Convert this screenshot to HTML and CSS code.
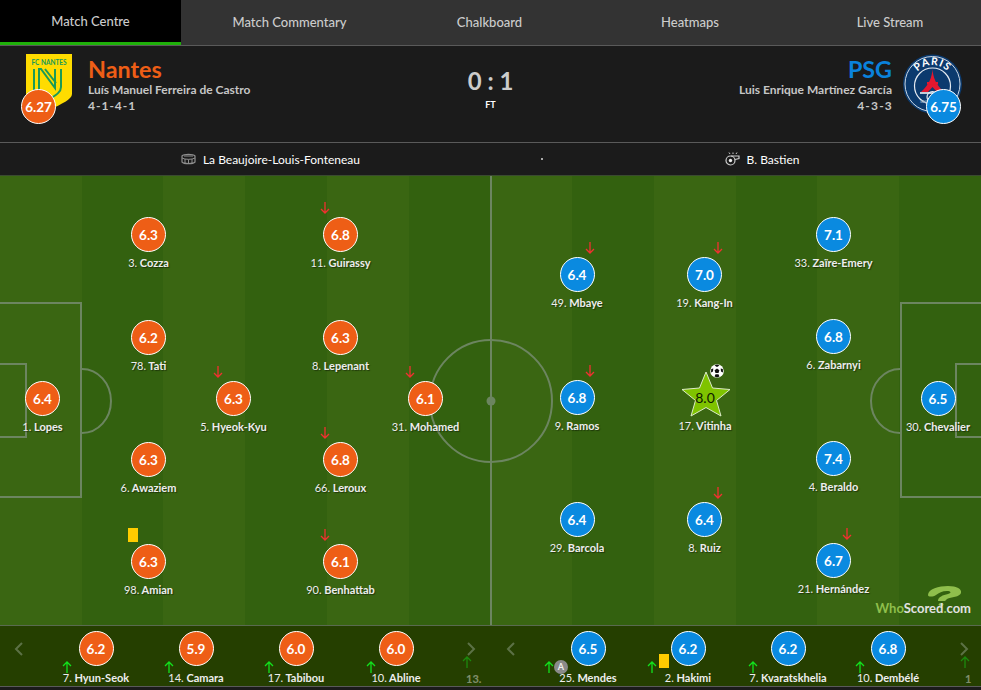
FILE: index.html
```html
<!DOCTYPE html>
<html lang="en">
<head>
<meta charset="utf-8">
<title>Nantes 0:1 PSG - Match Centre</title>
<link rel="stylesheet" href="styles.css">
</head>
<body>
<nav class="tabs">
  <a class="tab active">Match Centre</a>
  <a class="tab">Match Commentary</a>
  <a class="tab">Chalkboard</a>
  <a class="tab">Heatmaps</a>
  <a class="tab">Live Stream</a>
</nav>

<header class="match-header">
  <div class="team home">
    <div class="crest-wrap">
      <svg class="crest" width="46" height="56" viewBox="0 0 46 56">
        <path d="M0 0H46V40C46 45 36 50 23 56C10 50 0 45 0 40Z" fill="#ffdc00"/>
        <text x="23" y="11" class="crest-fc">FC NANTES</text>
        <g fill="none" stroke="#1a9a57" stroke-width="2">
          <path d="M8 15V36L12 39"/>
          <path d="M13 36V15H15L29 34V15"/>
          <path d="M19 15L30 29"/>
          <path d="M35 15V33C35 39 28 42 22 46"/>
        </g>
      </svg>
      <span class="badge orange team-badge">6.27</span>
    </div>
    <div class="team-text">
      <h2 class="team-name orange-text">Nantes</h2>
      <div class="manager">Luís Manuel Ferreira de Castro</div>
      <div class="formation">4-1-4-1</div>
    </div>
  </div>
  <div class="score">
    <div class="score-value">0 : 1</div>
    <div class="score-status">FT</div>
  </div>
  <div class="team away">
    <div class="team-text">
      <h2 class="team-name blue-text">PSG</h2>
      <div class="manager">Luis Enrique Martínez García</div>
      <div class="formation">4-3-3</div>
    </div>
    <div class="crest-wrap">
      <svg class="crest" width="60" height="60" viewBox="0 0 60 60">
        <circle cx="29.500" cy="30" r="29.500" fill="#0b3a6e"/>
        <circle cx="29.500" cy="30" r="27.500" fill="none" stroke="#c9d6e4" stroke-width="1"/>
        <path id="parisArc" d="M9.500 31A20 20 0 0 1 49.500 31" fill="none"/>
        <text class="crest-paris"><textPath href="#parisArc" startOffset="50%">PARIS</textPath></text>
        <circle cx="29.500" cy="32" r="18" fill="none" stroke="#e4eaf1" stroke-width="1.200"/>
        <path d="M29.500 15C30 23 33 31 41 38H34L29.500 33L25 38H18C26 31 29 23 29.500 15Z" fill="#e2172f"/>
        <path d="M24 28H35V30.500H24Z" fill="#e2172f"/>
        <path d="M17 39H42" stroke="#fff" stroke-width="1.500"/>
        <circle cx="29.500" cy="43" r="5.500" fill="none" stroke="#e4eaf1" stroke-width="1.200"/>
        <text x="17" y="49" class="crest-saint">SAINT</text>
      </svg>
      <span class="badge blue team-badge">6.75</span>
    </div>
  </div>
</header>

<section class="info-bar">
  <div class="info-cell">
    <svg width="15" height="12" viewBox="0 0 15 12"><path d="M1 3C3 .8 12 .8 14 3V9C12 11.200 3 11.200 1 9Z" fill="none" stroke="#8f8f8f" stroke-width="1.200"/><path d="M1 5C4 6.800 11 6.800 14 5M3 3H12M4 6V10M7.500 6.500V10.500M11 6V10" fill="none" stroke="#8f8f8f"/></svg>
    <span>La Beaujoire-Louis-Fonteneau</span>
  </div>
  <div class="info-dot"></div>
  <div class="info-cell">
    <svg width="15" height="14" viewBox="0 0 15 14"><circle cx="5.500" cy="8.500" r="4.500" fill="none" stroke="#ccc" stroke-width="1.200"/><circle cx="5.500" cy="8.500" r="1.700" fill="#eee"/><path d="M6 4H14V6.500L10 7.500" fill="none" stroke="#ccc" stroke-width="1.200"/><path d="M5 2L4 .5M8 2V.5M11 2L12 .5" stroke="#ccc"/></svg>
    <span>B. Bastien</span>
  </div>
</section>

<main class="pitch">
  <svg class="lines" width="981" height="449" viewBox="0 0 981 449">
    <g fill="none" stroke="#6c8560" stroke-width="2">
      <path d="M491 0V449"/>
      <circle cx="491" cy="225" r="61"/>
      <path d="M-2 127H81V321H-2"/>
      <path d="M-2 188H26V261H-2"/>
      <path d="M82 193A29 32 0 0 1 82 257"/>
      <path d="M983 127H901V321H983"/>
      <path d="M983 188H956V261H983"/>
      <path d="M900 193A29 32 0 0 0 900 257"/>
    </g>
    <circle cx="491" cy="225" r="4.500" fill="#6c8560"/>
  </svg>

  <div class="player" style="left:42.500px;top:205px"><span class="badge orange">6.4</span><span class="name"><i>1.</i> Lopes</span></div>
  <div class="player" style="left:148.500px;top:41px"><span class="badge orange">6.3</span><span class="name"><i>3.</i> Cozza</span></div>
  <div class="player" style="left:148.500px;top:144px"><span class="badge orange">6.2</span><span class="name"><i>78.</i> Tati</span></div>
  <div class="player" style="left:148.500px;top:266px"><span class="badge orange">6.3</span><span class="name"><i>6.</i> Awaziem</span></div>
  <div class="player" style="left:148.500px;top:368px"><span class="badge orange">6.3</span><span class="name"><i>98.</i> Amian</span><b class="yellow-card card-amian"></b></div>
  <div class="player" style="left:233.500px;top:205px"><span class="badge orange">6.3</span><span class="name"><i>5.</i> Hyeok-Kyu</span><svg class="sub-off off-left" width="10" height="12" viewBox="0 0 10 12"><path d="M5 0V11M1 7L5 11L9 7" fill="none" stroke="#f23030" stroke-width="1.300"/></svg></div>
  <div class="player" style="left:340.500px;top:41px"><span class="badge orange">6.8</span><span class="name"><i>11.</i> Guirassy</span><svg class="sub-off off-left" width="10" height="12" viewBox="0 0 10 12"><path d="M5 0V11M1 7L5 11L9 7" fill="none" stroke="#f23030" stroke-width="1.300"/></svg></div>
  <div class="player" style="left:340.500px;top:144px"><span class="badge orange">6.3</span><span class="name"><i>8.</i> Lepenant</span></div>
  <div class="player" style="left:340.500px;top:266px"><span class="badge orange">6.8</span><span class="name"><i>66.</i> Leroux</span><svg class="sub-off off-left" width="10" height="12" viewBox="0 0 10 12"><path d="M5 0V11M1 7L5 11L9 7" fill="none" stroke="#f23030" stroke-width="1.300"/></svg></div>
  <div class="player" style="left:340.500px;top:368px"><span class="badge orange">6.1</span><span class="name"><i>90.</i> Benhattab</span><svg class="sub-off off-left" width="10" height="12" viewBox="0 0 10 12"><path d="M5 0V11M1 7L5 11L9 7" fill="none" stroke="#f23030" stroke-width="1.300"/></svg></div>
  <div class="player" style="left:425.500px;top:205px"><span class="badge orange">6.1</span><span class="name"><i>31.</i> Mohamed</span><svg class="sub-off off-left" width="10" height="12" viewBox="0 0 10 12"><path d="M5 0V11M1 7L5 11L9 7" fill="none" stroke="#f23030" stroke-width="1.300"/></svg></div>

  <div class="player" style="left:938px;top:205px"><span class="badge blue">6.5</span><span class="name"><i>30.</i> Chevalier</span></div>
  <div class="player" style="left:833.500px;top:41px"><span class="badge blue">7.1</span><span class="name"><i>33.</i> Zaïre-Emery</span></div>
  <div class="player" style="left:833.500px;top:143px"><span class="badge blue">6.8</span><span class="name"><i>6.</i> Zabarnyi</span></div>
  <div class="player" style="left:833.500px;top:265px"><span class="badge blue">7.4</span><span class="name"><i>4.</i> Beraldo</span></div>
  <div class="player" style="left:833.500px;top:367px"><span class="badge blue">6.7</span><span class="name"><i>21.</i> Hernández</span><svg class="sub-off off-right" width="10" height="12" viewBox="0 0 10 12"><path d="M5 0V11M1 7L5 11L9 7" fill="none" stroke="#f23030" stroke-width="1.300"/></svg></div>
  <div class="player" style="left:704.500px;top:81px"><span class="badge blue">7.0</span><span class="name"><i>19.</i> Kang-In</span><svg class="sub-off off-right" width="10" height="12" viewBox="0 0 10 12"><path d="M5 0V11M1 7L5 11L9 7" fill="none" stroke="#f23030" stroke-width="1.300"/></svg></div>
  <div class="player" style="left:704.500px;top:326px"><span class="badge blue">6.4</span><span class="name"><i>8.</i> Ruiz</span><svg class="sub-off off-right" width="10" height="12" viewBox="0 0 10 12"><path d="M5 0V11M1 7L5 11L9 7" fill="none" stroke="#f23030" stroke-width="1.300"/></svg></div>
  <div class="player" style="left:577px;top:81px"><span class="badge blue">6.4</span><span class="name"><i>49.</i> Mbaye</span><svg class="sub-off off-right" width="10" height="12" viewBox="0 0 10 12"><path d="M5 0V11M1 7L5 11L9 7" fill="none" stroke="#f23030" stroke-width="1.300"/></svg></div>
  <div class="player" style="left:577px;top:204px"><span class="badge blue">6.8</span><span class="name"><i>9.</i> Ramos</span><svg class="sub-off off-right" width="10" height="12" viewBox="0 0 10 12"><path d="M5 0V11M1 7L5 11L9 7" fill="none" stroke="#f23030" stroke-width="1.300"/></svg></div>
  <div class="player" style="left:577px;top:326px"><span class="badge blue">6.4</span><span class="name"><i>29.</i> Barcola</span></div>

  <div class="player" style="left:705px;top:204px">
    <span class="badge star-badge">
      <svg class="star" width="50" height="46" viewBox="0 0 50 46"><path d="M25 1L31.500 17L49 18.500L35.500 29.500L40 45L25 36.500L10 45L14.500 29.500L1 18.500L18.500 17Z" fill="#7fc300" stroke="#dcebc8" stroke-width="1"/></svg>
      <span class="star-value">8.0</span>
    </span>
    <span class="name"><i>17.</i> Vitinha</span>
    <svg class="ball" width="14" height="14" viewBox="0 0 14 14"><circle cx="7" cy="7" r="6.800" fill="#fff"/><path d="M7 4.500L9.400 6.200L8.500 9H5.500L4.600 6.200Z" fill="#111"/><path d="M7 .5L9.500 1.500L7 3L4.500 1.500ZM12.800 5L13 8.500L11 7.500L10.700 4.500ZM1.200 5L1 8.500L3 7.500L3.300 4.500ZM4.500 12.500L5.500 10.200H8.500L9.500 12.500L7 13.500Z" fill="#111"/></svg>
  </div>

  <div class="whoscored">
    <svg class="ws-mark" width="37" height="20" viewBox="0 0 37 20"><path d="M1 9C1 3 12 0 21 0C30 0 35 3 34 7C33 11 24 11 20 13L18 15H11C11 11 16 9 21 8C25 7 24 5 20 5C15 5 12 7 9 9C6 11 1 11 1 9Z" fill="#8fbf4c"/><ellipse cx="14" cy="18.500" rx="2.500" ry="1.500" fill="#8fbf4c"/></svg>
    <span class="ws-text"><span class="ws-who">Who</span>Scored<span class="ws-who">.</span>com</span>
  </div>
</main>

<section class="bench">
  <div class="bench-side">
    <svg class="chev" width="10" height="14" viewBox="0 0 10 14"><path d="M8 1L2 7L8 13" fill="none" stroke="#5c7145" stroke-width="2"/></svg>
    <div class="bench-list">
      <div class="sub"><span class="badge orange">6.2</span><span class="name"><i>7.</i> Hyun-Seok</span><svg class="sub-on" style="left:16px" width="10" height="12" viewBox="0 0 10 12"><path d="M5 12V1M1 5L5 1L9 5" fill="none" stroke="#12e21c" stroke-width="1.300"/></svg></div>
      <div class="sub"><span class="badge orange">5.9</span><span class="name"><i>14.</i> Camara</span><svg class="sub-on" style="left:18px" width="10" height="12" viewBox="0 0 10 12"><path d="M5 12V1M1 5L5 1L9 5" fill="none" stroke="#12e21c" stroke-width="1.300"/></svg></div>
      <div class="sub"><span class="badge orange">6.0</span><span class="name"><i>17.</i> Tabibou</span><svg class="sub-on" style="left:18px" width="10" height="12" viewBox="0 0 10 12"><path d="M5 12V1M1 5L5 1L9 5" fill="none" stroke="#12e21c" stroke-width="1.300"/></svg></div>
      <div class="sub"><span class="badge orange">6.0</span><span class="name"><i>10.</i> Abline</span><svg class="sub-on" style="left:20px" width="10" height="12" viewBox="0 0 10 12"><path d="M5 12V1M1 5L5 1L9 5" fill="none" stroke="#12e21c" stroke-width="1.300"/></svg></div>
    </div>
    <div class="peek">
      <svg width="10" height="12" viewBox="0 0 10 12"><path d="M5 12V1M1 5L5 1L9 5" fill="none" stroke="#12e21c" stroke-width="1.300"/></svg>
      <span class="peek-num">13.</span>
    </div>
    <svg class="chev chev-next" width="10" height="14" viewBox="0 0 10 14"><path d="M2 1L8 7L2 13" fill="none" stroke="#5c7145" stroke-width="2"/></svg>
  </div>
  <div class="bench-side">
    <svg class="chev" width="10" height="14" viewBox="0 0 10 14"><path d="M8 1L2 7L8 13" fill="none" stroke="#5c7145" stroke-width="2"/></svg>
    <div class="bench-list">
      <div class="sub"><span class="badge blue">6.5</span><span class="name"><i>25.</i> Mendes</span><svg class="sub-on" style="left:6px" width="10" height="12" viewBox="0 0 10 12"><path d="M5 12V1M1 5L5 1L9 5" fill="none" stroke="#12e21c" stroke-width="1.300"/></svg><b class="assist">A</b></div>
      <div class="sub"><span class="badge blue">6.2</span><span class="name"><i>2.</i> Hakimi</span><svg class="sub-on" style="left:9px" width="10" height="12" viewBox="0 0 10 12"><path d="M5 12V1M1 5L5 1L9 5" fill="none" stroke="#12e21c" stroke-width="1.300"/></svg><b class="yellow-card card-hakimi"></b></div>
      <div class="sub"><span class="badge blue">6.2</span><span class="name"><i>7.</i> Kvaratskhelia</span><svg class="sub-on" style="left:10px" width="10" height="12" viewBox="0 0 10 12"><path d="M5 12V1M1 5L5 1L9 5" fill="none" stroke="#12e21c" stroke-width="1.300"/></svg></div>
      <div class="sub"><span class="badge blue">6.8</span><span class="name"><i>10.</i> Dembélé</span><svg class="sub-on" style="left:17px" width="10" height="12" viewBox="0 0 10 12"><path d="M5 12V1M1 5L5 1L9 5" fill="none" stroke="#12e21c" stroke-width="1.300"/></svg></div>
    </div>
    <div class="peek">
      <svg width="10" height="12" viewBox="0 0 10 12"><path d="M5 12V1M1 5L5 1L9 5" fill="none" stroke="#12e21c" stroke-width="1.300"/></svg>
      <span class="peek-num">1</span>
    </div>
    <svg class="chev chev-next" width="10" height="14" viewBox="0 0 10 14"><path d="M2 1L8 7L2 13" fill="none" stroke="#5c7145" stroke-width="2"/></svg>
  </div>
</section>
</body>
</html>
```

FILE: styles.css
```css
* { box-sizing: border-box; }
html, body { margin: 0; padding: 0; }
body {
  width: 981px;
  height: 690px;
  overflow: hidden;
  background: #1b1b1b;
  color: #fff;
  font-family: Lato, "Liberation Sans", sans-serif;
}

/* Tabs */
.tabs {
  display: grid;
  grid-template-columns: 181px 217px 183px 218px 182px;
  height: 46px;
  background: #333;
  border-bottom: 1px solid #5a5a5a;
}
.tab {
  display: flex;
  align-items: center;
  justify-content: center;
  height: 45px;
  padding-bottom: 1px;
  font-size: 13px;
  font-weight: 500;
  color: #ccc;
}
.tab.active {
  background: #000;
  border-bottom: 3px solid #1fb10a;
  padding-bottom: 0;
}

/* Header */
.match-header {
  display: grid;
  grid-template-columns: 1fr 1fr 1fr;
  height: 97px;
  background: #1b1b1b;
  border-bottom: 1px solid #5a5a5a;
}
.team {
  display: flex;
  align-items: flex-start;
  gap: 16px;
  padding-top: 8px;
}
.team.home { padding-left: 26px; }
.team.away { justify-content: flex-end; padding-right: 18px; gap: 11px; }
.away .team-text { text-align: right; }
.crest-wrap { position: relative; display: block; height: 60px; }
.crest { display: block; }
.crest-fc {
  font: 700 6.500px Lato, sans-serif;
  fill: #17985a;
  text-anchor: middle;
}
.crest-paris {
  font: 700 10.500px Lato, sans-serif;
  fill: #fff;
  text-anchor: middle;
  letter-spacing: 1px;
}
.crest-saint {
  font: 700 4px Lato, sans-serif;
  fill: #8fa6c0;
}
.team-badge { position: absolute; font-size: 12px; }
.home .team-badge { left: -5px; top: 35px; }
.away .team-badge { right: 2px; top: 35px; }
.team-text { padding-top: 2px; }
.team-name {
  margin: 0;
  font-size: 23.300px;
  line-height: 26px;
  font-weight: 700;
}
.orange-text { color: #ee5e16; }
.blue-text { color: #0a82dc; }
.manager {
  font-size: 12px;
  font-weight: 700;
  line-height: 16px;
  color: #c6c6c6;
}
.formation {
  font-size: 12px;
  font-weight: 700;
  line-height: 16px;
  color: #c6c6c6;
  letter-spacing: 1px;
}
.away .formation { letter-spacing: 1.200px; margin-right: -1px; }
.score { text-align: center; padding-top: 18px; }
.score-value {
  font-size: 24px;
  font-weight: 700;
  line-height: 34px;
  color: #ccc;
}
.score-status {
  font-size: 9px;
  font-weight: 700;
  line-height: 12px;
  margin-top: 1px;
}

/* Info bar */
.info-bar {
  display: grid;
  grid-template-columns: 541px 2px 1fr;
  align-items: center;
  height: 33px;
  background: #1b1b1b;
  border-bottom: 1px solid #3a4a30;
}
.info-cell {
  display: flex;
  align-items: center;
  justify-content: center;
  gap: 7px;
  font-size: 12px;
}
.info-cell span { color: #fff; }
.info-dot { width: 2px; height: 2px; background: #aaa; }

/* Pitch */
.pitch {
  position: relative;
  height: 449px;
  overflow: hidden;
  background: repeating-linear-gradient(90deg, #3a6612 0, #3a6612 81.750px, #33610f 81.750px, #33610f 163.500px);
}
.lines { position: absolute; left: 0; top: 0; }
.badge {
  display: flex;
  align-items: center;
  justify-content: center;
  width: 35px;
  height: 35px;
  flex: none;
  border: 1px solid #fff;
  border-radius: 50%;
  font-size: 13.500px;
  font-weight: 700;
  color: #fff;
}
.orange { background: #ee5e16; }
.blue { background: #0a8ae0; }
.player {
  position: absolute;
  width: 120px;
  margin-left: -60px;
  display: flex;
  flex-direction: column;
  align-items: center;
}
.name {
  margin-top: 3px;
  font-size: 11px;
  line-height: 16px;
  font-weight: 700;
  white-space: nowrap;
  color: #eee;
  text-shadow: 1px 1px 1px rgba(0, 0, 0, .45);
}
.name i { font-style: normal; font-weight: 400; }
.sub-off { position: absolute; top: -15px; display: block; }
.off-left { left: 39px; }
.off-right { left: 68px; }
.yellow-card {
  position: absolute;
  display: block;
  background: #ffcc00;
}
.card-amian { left: 39.500px; top: -16px; width: 10px; height: 14px; }
.star-badge {
  position: relative;
  background: none;
  border: 0;
}
.star { position: absolute; left: -7px; top: -9px; }
.star-value {
  position: relative;
  color: #0d1a00;
  font-weight: 400;
  font-size: 14px;
}
.ball { position: absolute; left: 65px; top: -16px; }

.whoscored {
  position: absolute;
  right: 10px;
  bottom: 9px;
  width: 96px;
  display: flex;
  flex-direction: column;
  align-items: flex-end;
}
.ws-mark { margin-right: 7px; margin-bottom: -6px; }
.ws-text {
  font-size: 13px;
  font-weight: 700;
  line-height: 16px;
  color: #e2e2e2;
  white-space: nowrap;
}
.ws-who { color: #8fbf4c; }

/* Bench */
.bench {
  display: grid;
  grid-template-columns: 490px 491px;
  height: 62px;
  background: #253f00;
  border-top: 1px solid #5a6a50;
  border-bottom: 1px solid #5a5a5a;
}
.bench-side {
  position: relative;
  display: block;
  overflow: hidden;
}
.bench-list {
  display: flex;
  padding: 5px 0 0 46px;
}
.bench-side:last-child .bench-list { padding-left: 48px; }
.sub {
  position: relative;
  width: 100px;
  display: flex;
  flex-direction: column;
  align-items: center;
}
.sub .name { margin-top: 4px; line-height: 16px; text-shadow: none; }
.sub-on { position: absolute; top: 30px; }
.assist {
  position: absolute;
  left: 16px;
  top: 29px;
  width: 14px;
  height: 14px;
  border-radius: 50%;
  background: #8a8a8a;
  color: #eee;
  font-size: 9px;
  line-height: 14px;
  text-align: center;
}
.card-hakimi { left: 21px; top: 23px; width: 10px; height: 14px; }
.chev { position: absolute; left: 14px; top: 16px; }
.chev-next { left: auto; right: 14px; }
.bench-side:last-child .chev { left: 16px; }
.bench-side:last-child .chev-next { left: auto; right: 12px; }
.peek {
  position: absolute;
  right: 14px;
  top: 30px;
  width: 16px;
  opacity: .45;
}
.peek svg { display: block; margin-left: 2px; }
.peek-num {
  display: block;
  margin: 3px 0 0 6px;
  font-size: 11px;
  font-weight: 700;
  line-height: 16px;
  color: #eee;
  white-space: nowrap;
}
.bench-side:last-child .peek { right: 6px; }
.bench-side:last-child .peek svg { margin-left: 1px; }
```
